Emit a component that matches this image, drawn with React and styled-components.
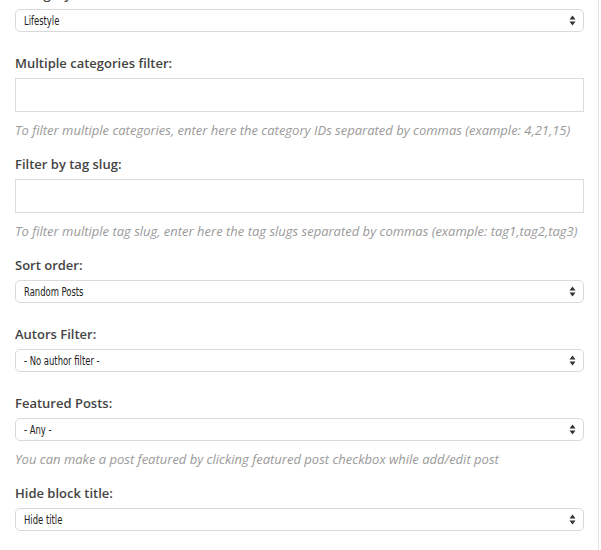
import React from "react";
import styled, { createGlobalStyle } from "styled-components";

const Global = createGlobalStyle`
  html, body { margin: 0; padding: 0; background: #fff; overflow: hidden; }
  body { font-family: "Open Sans", "Liberation Sans", sans-serif; }
`;

const Panel = styled.div`
  width: 583px;
  height: 550px;
  padding-left: 15px;
  border-right: 1px solid #e2e2e2;
  overflow: hidden;
`;

const Form = styled.div`
  width: 569px;
  margin-top: -15px;
  display: flex;
  flex-direction: column;
`;

const Field = styled.div`
  display: flex;
  flex-direction: column;
  margin-bottom: ${(p) => (p.$help ? "16px" : "22px")};
`;

const Label = styled.div`
  font-family: "Open Sans", sans-serif;
  font-weight: 600;
  font-size: 13px;
  line-height: 18px;
  color: #444;
  margin-bottom: 6px;
`;

const SelectBox = styled.div`
  box-sizing: border-box;
  height: 23px;
  border: 1px solid #d9d9d9;
  border-radius: 5px;
  background: #fff;
  display: flex;
  align-items: center;
  justify-content: space-between;
  padding: 0 7px 0 8px;
`;

const SelectText = styled.span`
  display: inline-block;
  font-family: "DejaVu Sans Condensed", "Liberation Sans", sans-serif;
  font-stretch: condensed;
  font-size: 12px;
  color: #222;
  transform: scaleX(0.78);
  transform-origin: left center;
  white-space: nowrap;
`;

const TextInput = styled.div`
  box-sizing: border-box;
  height: 34px;
  border: 1px solid #dcdcdc;
  background: #fff;
`;

const Help = styled.div`
  font-family: "Open Sans", sans-serif;
  font-style: italic;
  font-size: 13px;
  line-height: 18px;
  color: #9a9a9a;
  margin-top: 9px;
`;

const Arrows = () => (
  <svg width="7" height="11" viewBox="0 0 7 11">
    <path d="M3.5 0.5 L6.5 4.5 L0.5 4.5 Z" fill="#333" />
    <path d="M3.5 10.5 L6.5 6.5 L0.5 6.5 Z" fill="#333" />
  </svg>
);

const Select = ({ value }) => (
  <SelectBox>
    <SelectText>{value}</SelectText>
    <Arrows />
  </SelectBox>
);

export default function App() {
  return (
    <>
      <Global />
      <Panel>
        <Form>
          <Field>
            <Label>Category:</Label>
            <Select value="Lifestyle" />
          </Field>
          <Field $help>
            <Label>Multiple categories filter:</Label>
            <TextInput />
            <Help>
              To filter multiple categories, enter here the category IDs separated by commas (example: 4,21,15)
            </Help>
          </Field>
          <Field $help>
            <Label>Filter by tag slug:</Label>
            <TextInput />
            <Help>
              To filter multiple tag slug, enter here the tag slugs separated by commas (example: tag1,tag2,tag3)
            </Help>
          </Field>
          <Field>
            <Label>Sort order:</Label>
            <Select value="Random Posts" />
          </Field>
          <Field>
            <Label>Autors Filter:</Label>
            <Select value="- No author filter -" />
          </Field>
          <Field $help>
            <Label>Featured Posts:</Label>
            <Select value="- Any -" />
            <Help>You can make a post featured by clicking featured post checkbox while add/edit post</Help>
          </Field>
          <Field>
            <Label>Hide block title:</Label>
            <Select value="Hide title" />
          </Field>
        </Form>
      </Panel>
    </>
  );
}
